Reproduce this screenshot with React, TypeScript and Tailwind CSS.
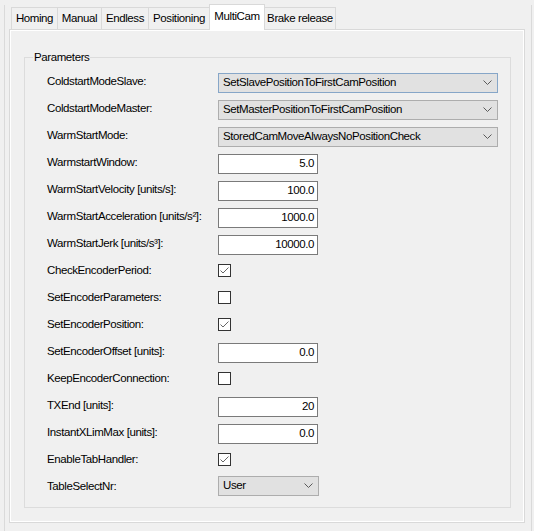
import React from 'react';

type Row =
  | { label: string; kind: 'select'; value: string; wide?: boolean; focus?: boolean }
  | { label: string; kind: 'text'; value: string }
  | { label: string; kind: 'check'; value: boolean };

const rows: Row[] = [
  { label: 'ColdstartModeSlave:', kind: 'select', value: 'SetSlavePositionToFirstCamPosition', wide: true, focus: true },
  { label: 'ColdstartModeMaster:', kind: 'select', value: 'SetMasterPositionToFirstCamPosition', wide: true },
  { label: 'WarmStartMode:', kind: 'select', value: 'StoredCamMoveAlwaysNoPositionCheck', wide: true },
  { label: 'WarmstartWindow:', kind: 'text', value: '5.0' },
  { label: 'WarmStartVelocity [units/s]:', kind: 'text', value: '100.0' },
  { label: 'WarmStartAcceleration [units/s²]:', kind: 'text', value: '1000.0' },
  { label: 'WarmStartJerk [units/s³]:', kind: 'text', value: '10000.0' },
  { label: 'CheckEncoderPeriod:', kind: 'check', value: true },
  { label: 'SetEncoderParameters:', kind: 'check', value: false },
  { label: 'SetEncoderPosition:', kind: 'check', value: true },
  { label: 'SetEncoderOffset [units]:', kind: 'text', value: '0.0' },
  { label: 'KeepEncoderConnection:', kind: 'check', value: false },
  { label: 'TXEnd [units]:', kind: 'text', value: '20' },
  { label: 'InstantXLimMax [units]:', kind: 'text', value: '0.0' },
  { label: 'EnableTabHandler:', kind: 'check', value: true },
  { label: 'TableSelectNr:', kind: 'select', value: 'User' },
];

const tabs = [
  { name: 'Homing', w: 'w-[47px]' },
  { name: 'Manual', w: 'w-[45px]' },
  { name: 'Endless', w: 'w-[48px]' },
  { name: 'Positioning', w: 'w-[62px]' },
  { name: 'MultiCam', w: 'w-[56px]', active: true },
  { name: 'Brake release', w: 'w-[72px]' },
];

function Chevron() {
  return (
    <svg width="9" height="6" viewBox="0 0 9 6" fill="none" className="shrink-0">
      <path d="M0.5 0.5 L4.5 4.5 L8.5 0.5" stroke="#5a5a5a" strokeWidth="1" />
    </svg>
  );
}

function Control({ row }: { row: Row }) {
  if (row.kind === 'select') {
    return (
      <div
        className={`flex h-[20px] items-center justify-between border bg-[#e1e1e1] pl-[4px] pr-[5px] ${
          row.wide ? 'w-[280px]' : 'mb-[3px] w-[101px]'
        } ${row.focus ? 'border-[#86a6c8]' : 'border-[#adadad]'}`}
      >
        <span>{row.value}</span>
        <Chevron />
      </div>
    );
  }
  if (row.kind === 'text') {
    return (
      <div className="flex h-[20px] w-[100px] items-center justify-end border border-[#7a7a7a] bg-white pr-[3px]">
        {row.value}
      </div>
    );
  }
  return (
    <div className="mb-[3px] flex h-[13px] w-[13px] items-center justify-center border border-[#333333] bg-white">
      {row.value && (
        <svg width="11" height="11" viewBox="0 0 11 11" fill="none">
          <path d="M1.5 5.5 L4 8 L9.5 2.5" stroke="#666666" strokeWidth="1" />
        </svg>
      )}
    </div>
  );
}

export default function App() {
  return (
    <div
      className="h-[531px] w-[534px] overflow-hidden bg-[#f0f0f0] text-[11.5px] leading-none tracking-[-0.4px] text-black"
      style={{ fontFamily: '"Liberation Sans", Arial, sans-serif' }}
    >
      <div className="ml-[4px] h-[527px] w-[528px] border-x border-b border-[#dadada]">
        {/* tab strip */}
        <div className="ml-[6px] mt-[5px] flex h-[24px] items-end">
          {tabs.map((t, i) => (
            <div
              key={t.name}
              className={`flex items-center justify-center border border-b-0 border-[#d9d9d9] ${t.w} ${
                i > 0 ? '-ml-px' : ''
              } ${t.active ? 'relative z-10 -mb-px h-[26px] bg-white pb-[2px]' : 'h-[22px] bg-[#f0f0f0] pt-[1px]'}`}
            >
              {t.name}
            </div>
          ))}
        </div>

        {/* tab page */}
        <div className="ml-[4px] h-[494px] w-[516px] border border-[#d9d9d9]">
          <div className="h-full w-full border border-white pl-[13px] pt-[26px]">
            {/* group box */}
            <div className="relative h-[451px] w-[487px] border border-[#dcdcdc] pl-[22px] pt-[11px]">
              <span className="absolute -top-[6px] left-[8px] bg-[#f0f0f0] px-px">Parameters</span>
              <div className="flex flex-col">
                {rows.map((r) => (
                  <div key={r.label} className="flex h-[27px] items-center">
                    <div className="w-[171px] pb-px">{r.label}</div>
                    <Control row={r} />
                  </div>
                ))}
              </div>
            </div>
          </div>
        </div>
      </div>
    </div>
  );
}
